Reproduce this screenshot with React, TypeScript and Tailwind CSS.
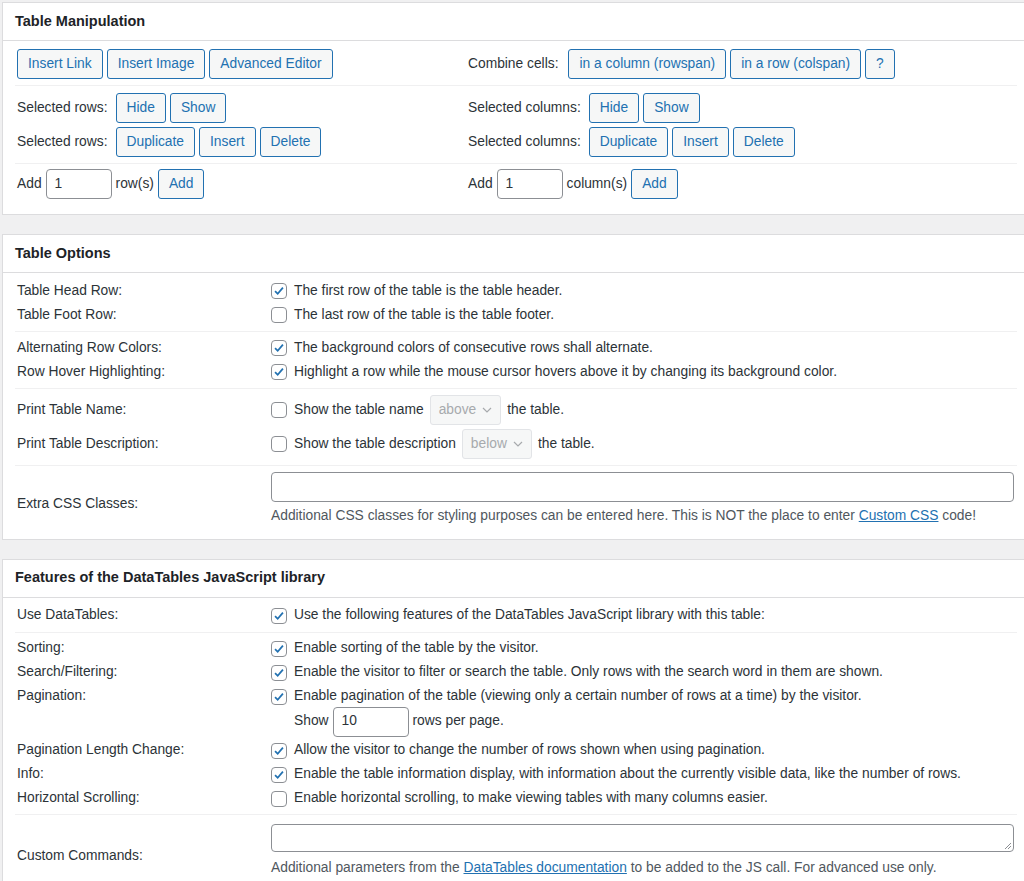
import * as React from "react";

const FONT = { fontFamily: '"Liberation Sans", Arial, sans-serif' };

function Btn({ children }: { children: React.ReactNode }) {
  return (
    <span className="inline-flex h-[30px] items-center rounded-[3px] border border-[#2271b1] bg-[#f6f7f7] px-[10px] text-[13.8px] text-[#2271b1]">
      {children}
    </span>
  );
}

function Box({ checked }: { checked?: boolean }) {
  return (
    <span className="mr-[7px] inline-flex h-[16px] w-[16px] shrink-0 items-center justify-center rounded-[4px] border border-[#8c8f94] bg-white">
      {checked ? (
        <svg viewBox="0 0 16 16" className="h-[14px] w-[14px]">
          <path d="M3.5 8.2l3 3 6-7" fill="none" stroke="#2271b1" strokeWidth="2" />
        </svg>
      ) : null}
    </span>
  );
}

function TextInput({ value, w }: { value: string; w: string }) {
  return (
    <span className={`inline-flex h-[30px] items-center rounded-[4px] border border-[#8c8f94] bg-white px-[8px] ${w}`}>
      {value}
    </span>
  );
}

function Panel({ title, children, className }: { title: string; children: React.ReactNode; className?: string }) {
  return (
    <div className={`ml-[2px] border border-[#dcdcde] bg-white ${className ?? ""}`}>
      <div className="flex h-[38px] items-center border-b border-[#dcdcde] px-[12px] text-[14.5px] font-bold text-[#1d2327]">
        {title}
      </div>
      <div className="px-[12px]">{children}</div>
    </div>
  );
}

function OptRow({
  label,
  checked,
  children,
  h = "h-[24px]",
}: {
  label: string;
  checked?: boolean;
  children: React.ReactNode;
  h?: string;
}) {
  return (
    <div className={`flex items-center ${h}`}>
      <div className="w-[256px] shrink-0 pl-[2px]">{label}</div>
      <div className="flex items-center">
        <Box checked={checked} />
        {children}
      </div>
    </div>
  );
}

const Sep = () => <div className="my-[4px] h-px bg-[#f0f0f1]" />;

function Select({ v }: { v: string }) {
  return (
    <span className="mx-[6px] inline-flex h-[30px] items-center gap-[6px] rounded-[3px] border border-[#e2e4e7] bg-[#f6f7f7] px-[8px] text-[#a7aaad]">
      {v}
      <svg viewBox="0 0 10 6" className="h-[6px] w-[10px]">
        <path d="M1 1l4 4 4-4" fill="none" stroke="#a7aaad" strokeWidth="1.2" />
      </svg>
    </span>
  );
}

export default function App() {
  return (
    <div className="min-h-[881px] overflow-hidden bg-[#f0f0f1] pt-[2px] text-[13.8px] text-[#2c3338]" style={FONT}>
      <div className="w-[1030px]">
        <Panel title="Table Manipulation">
          <div className="grid grid-cols-[453px_1fr] pb-[10px]">
            {[
              {
                first: (
                  <>
                    <Btn>Insert Link</Btn>
                    <Btn>Insert Image</Btn>
                    <Btn>Advanced Editor</Btn>
                  </>
                ),
                sel: "Selected rows:",
                unit: "row(s)",
                pl: "pl-[2px]",
              },
              {
                first: (
                  <>
                    <span className="mr-[6px]">Combine cells:</span>
                    <Btn>in a column (rowspan)</Btn>
                    <Btn>in a row (colspan)</Btn>
                    <Btn>?</Btn>
                  </>
                ),
                sel: "Selected columns:",
                unit: "column(s)",
                pl: "",
              },
            ].map((c) => (
              <div key={c.sel}>
                <div className={`flex h-[44px] items-center gap-[4px] pt-[2px] ${c.pl}`}>{c.first}</div>
                <div className="h-px bg-[#f0f0f1]" />
                <div className={`mt-[7px] flex h-[30px] items-center gap-[4px] ${c.pl}`}>
                  <span className="mr-[4px]">{c.sel}</span>
                  <Btn>Hide</Btn>
                  <Btn>Show</Btn>
                </div>
                <div className={`mt-[4px] flex h-[30px] items-center gap-[4px] ${c.pl}`}>
                  <span className="mr-[4px]">{c.sel}</span>
                  <Btn>Duplicate</Btn>
                  <Btn>Insert</Btn>
                  <Btn>Delete</Btn>
                </div>
                <div className="mt-[6px] h-px bg-[#f0f0f1]" />
                <div className={`flex h-[40px] items-center gap-[4px] ${c.pl}`}>
                  <span>Add</span>
                  <TextInput value="1" w="w-[66px]" />
                  <span>{c.unit}</span>
                  <Btn>Add</Btn>
                </div>
              </div>
            ))}
          </div>
        </Panel>

        <Panel title="Table Options" className="mt-[19px]">
          <div className="pb-[12px] pt-[6px]">
            <OptRow label="Table Head Row:" checked>The first row of the table is the table header.</OptRow>
            <OptRow label="Table Foot Row:">The last row of the table is the table footer.</OptRow>
            <Sep />
            <OptRow label="Alternating Row Colors:" checked>The background colors of consecutive rows shall alternate.</OptRow>
            <OptRow label="Row Hover Highlighting:" checked>Highlight a row while the mouse cursor hovers above it by changing its background color.</OptRow>
            <Sep />
            <OptRow label="Print Table Name:" h="h-[34px]">
              Show the table name <Select v="above" /> the table.
            </OptRow>
            <OptRow label="Print Table Description:" h="h-[34px]">
              Show the table description <Select v="below" /> the table.
            </OptRow>
            <Sep />
            <div className="flex pt-[2px]">
              <div className="w-[256px] shrink-0 pl-[2px] pt-[22px]">Extra CSS Classes:</div>
              <div className="w-[743px]">
                <div className="h-[30px] rounded-[4px] border border-[#8c8f94] bg-white" />
                <div className="mt-[4px] text-[#50575e]">
                  Additional CSS classes for styling purposes can be entered here. This is NOT the place to enter{" "}
                  <span className="text-[#2271b1] underline">Custom CSS</span> code!
                </div>
              </div>
            </div>
          </div>
        </Panel>

        <Panel title="Features of the DataTables JavaScript library" className="mt-[19px]">
          <div className="pb-[12px] pt-[6px]">
            <OptRow label="Use DataTables:" checked>Use the following features of the DataTables JavaScript library with this table:</OptRow>
            <Sep />
            <OptRow label="Sorting:" checked>Enable sorting of the table by the visitor.</OptRow>
            <OptRow label="Search/Filtering:" checked>Enable the visitor to filter or search the table. Only rows with the search word in them are shown.</OptRow>
            <OptRow label="Pagination:" checked>Enable pagination of the table (viewing only a certain number of rows at a time) by the visitor.</OptRow>
            <div className="flex h-[26px] items-center gap-[4px] pl-[279px]">
              <span>Show</span>
              <TextInput value="10" w="w-[76px]" />
              <span>rows per page.</span>
            </div>
            <div className="h-[4px]" />
            <OptRow label="Pagination Length Change:" checked>Allow the visitor to change the number of rows shown when using pagination.</OptRow>
            <OptRow label="Info:" checked>Enable the table information display, with information about the currently visible data, like the number of rows.</OptRow>
            <OptRow label="Horizontal Scrolling:">Enable horizontal scrolling, to make viewing tables with many columns easier.</OptRow>
            <div className="my-[3px] h-px bg-[#f0f0f1]" />
            <div className="flex pt-[6px]">
              <div className="w-[256px] shrink-0 pl-[2px] pt-[22px]">Custom Commands:</div>
              <div className="w-[743px]">
                <div className="relative h-[28px] rounded-[4px] border border-[#8c8f94] bg-white">
                  <svg viewBox="0 0 8 8" className="absolute bottom-[1px] right-[1px] h-[8px] w-[8px]">
                    <path d="M7 1L1 7M7 4L4 7" stroke="#8c8f94" strokeWidth="1" />
                  </svg>
                </div>
                <div className="mt-[6px] text-[#50575e]">
                  Additional parameters from the{" "}
                  <span className="text-[#2271b1] underline">DataTables documentation</span> to be added to the JS call. For advanced use only.
                </div>
              </div>
            </div>
          </div>
        </Panel>
      </div>
    </div>
  );
}
